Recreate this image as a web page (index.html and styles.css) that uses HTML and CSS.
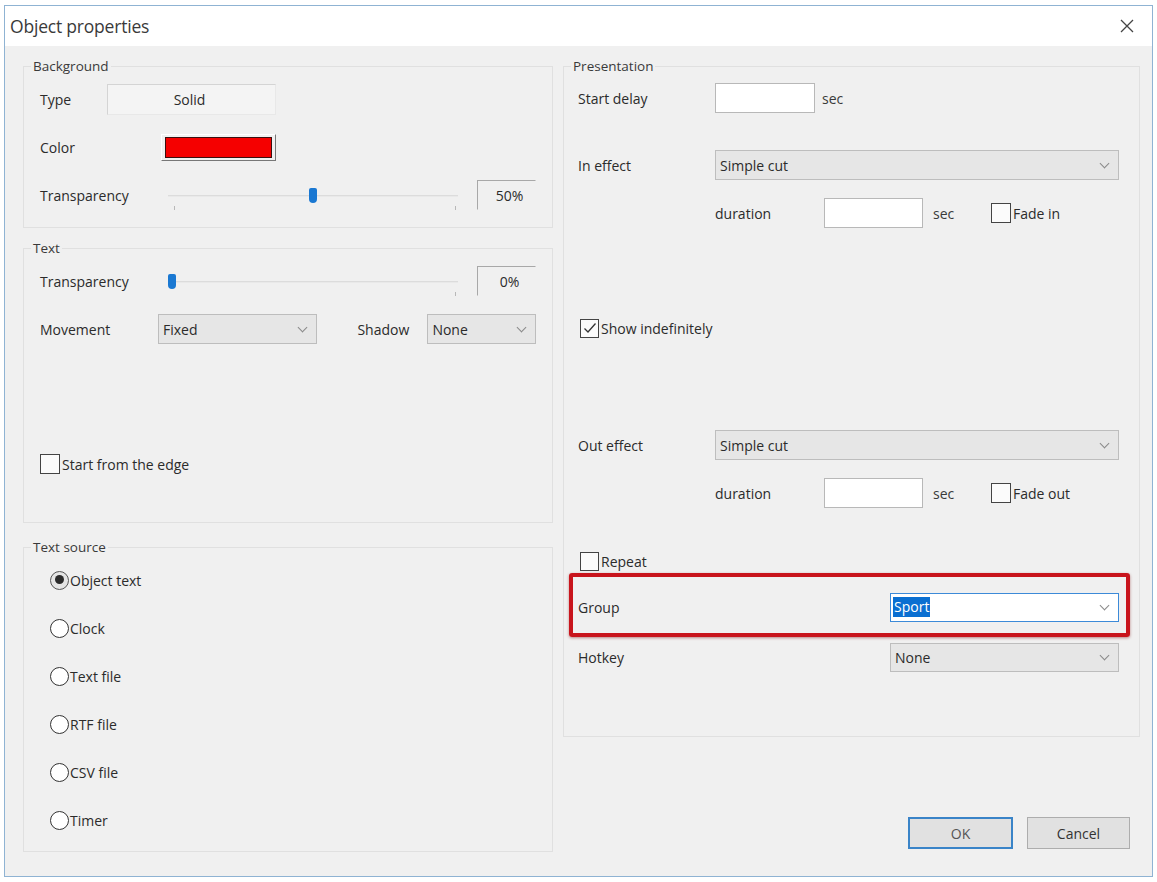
FILE: index.html
```html
<!DOCTYPE html>
<html>
<head>
<meta charset="utf-8">
<link rel="stylesheet" href="styles.css">
</head>
<body>
<div class="window">
  <div class="titlebar">
    <span class="title">Object properties</span>
    <svg class="close" width="14" height="14" viewBox="0 0 14 14"><path d="M1 1 L13 13 M13 1 L1 13" stroke="#444" stroke-width="1.3" fill="none"/></svg>
  </div>
  <div class="content">
    <div class="col left">
      <fieldset class="group g-bg">
        <legend>Background</legend>
        <div class="gbody">
          <div class="row"><span class="lbl w67">Type</span><div class="btn-solid">Solid</div></div>
          <div class="row"><span class="lbl w121">Color</span><div class="swatch"><div class="swatch-in"></div></div></div>
          <div class="row"><span class="lbl w125">Transparency</span>
            <div class="slider"><div class="track"></div><div class="thumb" style="left:144px"></div><span class="tick t1"></span><span class="tick t2"></span></div>
            <div class="valbox">50%</div>
          </div>
        </div>
      </fieldset>
      <fieldset class="group g-text">
        <legend>Text</legend>
        <div class="gbody">
          <div class="row"><span class="lbl w125">Transparency</span>
            <div class="slider"><div class="track"></div><div class="thumb" style="left:3px"></div><span class="tick t2"></span></div>
            <div class="valbox">0%</div>
          </div>
          <div class="row"><span class="lbl w118">Movement</span>
            <div class="select s-move"><span>Fixed</span><i class="chev"></i></div>
            <span class="lbl shadow-lbl">Shadow</span>
            <div class="select s-shadow"><span>None</span><i class="chev"></i></div>
          </div>
          <div class="row crow edge"><span class="cbox"></span><span class="ctext">Start from the edge</span></div>
        </div>
      </fieldset>
      <fieldset class="group g-src">
        <legend>Text source</legend>
        <div class="gbody">
          <div class="row rrow"><span class="radio on"></span><span class="rtext">Object text</span></div>
          <div class="row rrow"><span class="radio"></span><span class="rtext">Clock</span></div>
          <div class="row rrow"><span class="radio"></span><span class="rtext">Text file</span></div>
          <div class="row rrow"><span class="radio"></span><span class="rtext">RTF file</span></div>
          <div class="row rrow"><span class="radio"></span><span class="rtext">CSV file</span></div>
          <div class="row rrow"><span class="radio"></span><span class="rtext">Timer</span></div>
        </div>
      </fieldset>
    </div>
    <div class="col right">
      <fieldset class="group g-pres">
        <legend>Presentation</legend>
        <div class="gbody pbody">
          <div class="row"><span class="lbl w137">Start delay</span><div class="input i-delay"></div><span class="sec s1">sec</span></div>
          <div class="row r-ineff"><span class="lbl w137">In effect</span><div class="select s-wide"><span>Simple cut</span><i class="chev"></i></div></div>
          <div class="row indent"><span class="lbl w109">duration</span><div class="input i-dur"></div><span class="sec s2">sec</span><span class="cbox"></span><span class="ctext">Fade in</span></div>
          <div class="row crow r-show"><span class="cbox checked"><svg width="14" height="12" viewBox="0 0 14 12"><path d="M1.5 6.5 L5 10 L12.5 1.5" stroke="#333" stroke-width="1.3" fill="none"/></svg></span><span class="ctext">Show indefinitely</span></div>
          <div class="row r-outeff"><span class="lbl w137">Out effect</span><div class="select s-wide"><span>Simple cut</span><i class="chev"></i></div></div>
          <div class="row indent"><span class="lbl w109">duration</span><div class="input i-dur"></div><span class="sec s2">sec</span><span class="cbox"></span><span class="ctext">Fade out</span></div>
          <div class="row crow r-repeat"><span class="cbox"></span><span class="ctext">Repeat</span></div>
          <div class="row r-group"><span class="lbl grow">Group</span><div class="select s-right focus"><span class="sel">Sport</span><i class="chev"></i></div><div class="highlight"></div></div>
          <div class="row r-hot"><span class="lbl grow">Hotkey</span><div class="select s-right"><span>None</span><i class="chev"></i></div></div>
        </div>
      </fieldset>
      <div class="buttons">
        <div class="btn ok">OK</div>
        <div class="btn">Cancel</div>
      </div>
    </div>
  </div>
</div>
</body>
</html>
```
FILE: styles.css
```css
* { box-sizing: border-box; }
body {
  margin: 0;
  background: #fff;
  font-family: "Open Sans", "Noto Sans", sans-serif;
  font-size: 14px;
  color: #2b2b2b;
}
.window {
  margin: 5px 0 0 4px;
  width: 1149px;
  height: 872px;
  border: 1px solid #8fb3d3;
  background: #f0f0f0;
  display: flex;
  flex-direction: column;
}
.titlebar {
  height: 40px;
  flex: none;
  background: #fff;
  display: flex;
  align-items: center;
  justify-content: space-between;
  padding: 0 18px 0 5px;
}
.title { font-size: 17.5px; color: #3a3a3a; letter-spacing: -0.2px; }
.content {
  display: flex;
  gap: 10px;
  padding: 13px 0 0 18px;
}
.col { display: flex; flex-direction: column; }
.left { width: 530px; }
.right { width: 577px; }

.group {
  margin: 0;
  padding: 0;
  border: 1px solid #e0e0e0;
  min-width: 0;
}
.group legend {
  margin-left: 7px;
  padding: 0 2px;
  line-height: 14px;
  font-size: 13.5px;
  color: #3a3a3a;
}
.g-bg { height: 169px; }
.g-text { height: 282px; margin-top: 13px; }
.g-src { height: 312px; margin-top: 17px; }
.g-pres { height: 678px; }

.gbody { padding: 2px 16px 0 16px; }
.pbody { padding: 1px 20px 0 14px; }

.row { height: 48px; display: flex; align-items: center; position: relative; }
.lbl { flex: none; white-space: nowrap; }
.w67 { width: 67px; }
.w109 { width: 109px; }
.w118 { width: 118px; }
.w121 { width: 121px; }
.w125 { width: 125px; }
.w137 { width: 137px; }
.grow { flex: 1; }

.btn-solid {
  width: 169px;
  height: 31px;
  border: 1px solid #d4d4d4;
  border-right-color: #e8e8e8;
  border-bottom-color: #e8e8e8;
  background: #f4f4f4;
  display: flex;
  align-items: center;
  justify-content: center;
  padding-right: 4px;
}
.swatch {
  width: 115px;
  height: 27px;
  border: 1px solid #fff;
  border-right-color: #777;
  border-bottom-color: #777;
  padding: 2px 3px;
}
.swatch-in {
  width: 100%;
  height: 100%;
  background: #f50000;
  border: 1px solid #3a1010;
}
.slider {
  position: relative;
  width: 295px;
  height: 30px;
  flex: none;
}
.track {
  position: absolute;
  left: 3px;
  right: 2px;
  top: 15px;
  height: 2px;
  background: #dcdcdc;
  border-bottom: 1px solid #e9e9e9;
}
.thumb {
  position: absolute;
  top: 8px;
  width: 8px;
  height: 15px;
  background: #1a78d2;
  border-radius: 2px 2px 4px 4px;
}
.tick {
  position: absolute;
  top: 26px;
  width: 1px;
  height: 4px;
  background: #b8b8b8;
}
.t1 { left: 9px; }
.t2 { left: 290px; }
.valbox {
  margin-left: 17px;
  width: 60px;
  height: 30px;
  border: 1px solid #a8a8a8;
  border-right-color: #f0f0f0;
  border-bottom-color: #f0f0f0;
  display: flex;
  align-items: center;
  justify-content: center;
  padding-left: 6px;
}

.select {
  height: 30px;
  background: #e6e6e6;
  border: 1px solid #bdbdbd;
  display: flex;
  align-items: center;
  justify-content: space-between;
  padding: 0 10px 0 4px;
}
.chev {
  width: 7px;
  height: 7px;
  border-right: 1.2px solid #8a8a8a;
  border-bottom: 1.2px solid #8a8a8a;
  transform: rotate(45deg);
  margin-top: -4px;
}
.s-move { width: 160px; }
.shadow-lbl { margin-left: 40px; width: 70px; }
.s-shadow { width: 109px; }
.s-wide { flex: 1; }
.s-right { width: 229px; height: 29px; }
.focus { background: #fff; border-color: #3c8ad8; padding-left: 2px; }
.sel { background: #0a6fd1; color: #fff; padding: 0 1px; line-height: 20px; }

.input {
  height: 30px;
  background: #fff;
  border: 1px solid #b8b8b8;
}
.i-delay { width: 100px; }
.i-dur { width: 99px; }
.sec { color: #3a3a3a; }
.s1 { margin-left: 7px; }
.s2 { margin-left: 10px; width: 58px; }

.cbox {
  flex: none;
  width: 20px;
  height: 20px;
  border: 1px solid #444;
  background: #fbfbfb;
  display: flex;
  align-items: center;
  justify-content: center;
}
.ctext { margin-left: 2px; }
.edge { height: 24px; margin-top: 99px; }
.r-ineff { margin-top: 19px; }
.indent { padding-left: 137px; }
.r-show { margin-left: 2px; margin-top: 67px; }
.r-show .cbox, .r-repeat .cbox { width: 19px; height: 19px; }
.r-outeff { margin-top: 69px; }
.r-repeat { margin-left: 2px; margin-top: 20px; height: 48px; }
.r-group { margin-top: -2px; }
.r-hot { margin-top: 2px; }

.rrow { padding-left: 10px; }
.radio {
  flex: none;
  width: 19px;
  height: 19px;
  border: 1.3px solid #333;
  border-radius: 50%;
  background: #fff;
  position: relative;
}
.radio.on { border-color: #555; background: #e4e4e4; }
.radio.on::after {
  content: "";
  position: absolute;
  left: 3.5px;
  top: 3.5px;
  width: 9px;
  height: 9px;
  border-radius: 50%;
  background: #2a2a2a;
}
.rtext { margin-left: 1px; }

.highlight {
  position: absolute;
  left: -9px;
  top: -10px;
  width: 561px;
  height: 64px;
  border: 4px solid #c8141c;
  border-radius: 3px;
  box-shadow: 0 1px 3px rgba(120, 0, 0, 0.45);
  pointer-events: none;
}

.buttons {
  display: flex;
  justify-content: flex-end;
  gap: 14px;
  margin-top: 80px;
  padding-right: 10px;
}
.btn {
  width: 103px;
  height: 32px;
  background: #e1e1e1;
  border: 1px solid #adadad;
  display: flex;
  align-items: center;
  justify-content: center;
  color: #333;
}
.btn.ok { width: 105px; border: 2px solid #3a84c8; color: #555; }
```
